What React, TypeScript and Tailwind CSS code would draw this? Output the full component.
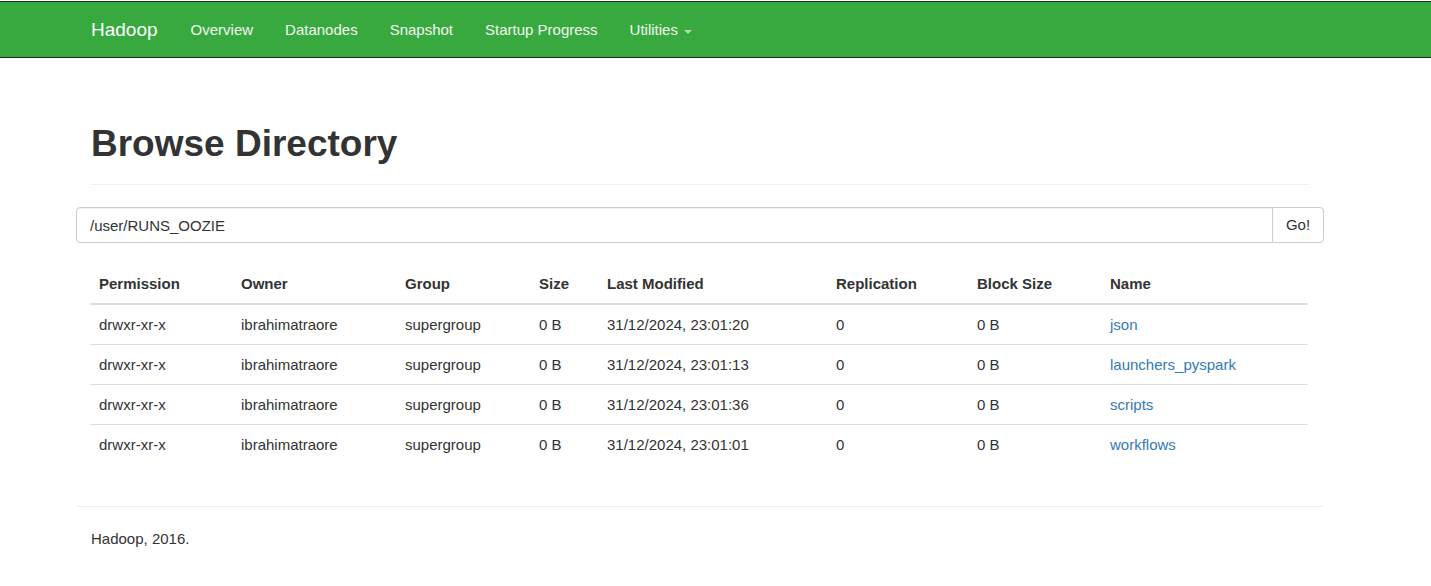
import React from 'react';

const rows = [
  { modified: '31/12/2024, 23:01:20', name: 'json' },
  { modified: '31/12/2024, 23:01:13', name: 'launchers_pyspark' },
  { modified: '31/12/2024, 23:01:36', name: 'scripts' },
  { modified: '31/12/2024, 23:01:01', name: 'workflows' },
];

const headers = [
  { label: 'Permission', w: 'w-[142px]' },
  { label: 'Owner', w: 'w-[164px]' },
  { label: 'Group', w: 'w-[134px]' },
  { label: 'Size', w: 'w-[68px]' },
  { label: 'Last Modified', w: 'w-[229px]' },
  { label: 'Replication', w: 'w-[141px]' },
  { label: 'Block Size', w: 'w-[133px]' },
  { label: 'Name', w: 'w-[206px]' },
];

function Navbar() {
  return (
    <nav className="mt-px h-[57px] bg-[#38a93f] border-y border-[#1f2a1f]">
      <div className="pl-[76px] h-full">
        <div className="flex items-center h-full pt-[2px]">
          <a className="pl-[15px] pr-[17px] text-[19px] text-white">Hadoop</a>
          {['Overview', 'Datanodes', 'Snapshot', 'Startup Progress'].map((item) => (
            <a key={item} className="px-4 text-[15px] text-[#f2f8f2]">
              {item}
            </a>
          ))}
          <a className="px-4 text-[15px] text-[#f2f8f2] flex items-center">
            Utilities
            <span className="ml-[6px] mt-[2px] w-0 h-0 border-t-[4px] border-x-[4px] border-t-[#b5dab7] border-x-transparent" />
          </a>
        </div>
      </div>
    </nav>
  );
}

export default function App() {
  return (
    <div className="min-h-[586px] bg-white text-[#333] text-[15px]" style={{ fontFamily: '"Liberation Sans", Arial, sans-serif' }}>
      <Navbar />

      <div className="pl-[76px]">
        <div className="w-[1248px]">
          <div className="px-[15px]">
            <h1 className="mt-[65px] pb-[20px] border-b border-[#eee] text-[37px] leading-[41px] font-bold text-[#333]">
              Browse Directory
            </h1>
          </div>

          <div className="mt-[22px] flex h-[36px]">
            <input
              readOnly
              value="/user/RUNS_OOZIE"
              className="flex-1 h-full px-[13px] text-[15px] text-[#333] border border-[#ccc] rounded-l-[4px] outline-none shadow-[inset_0_1px_1px_rgba(0,0,0,0.075)]"
            />
            <button className="w-[52px] h-full -ml-px border border-[#ccc] rounded-r-[4px] bg-white text-[15px] text-[#333]">
              Go!
            </button>
          </div>

          <div className="px-[15px] mt-[21px]">
            <table className="w-[1217px] table-fixed border-collapse">
              <thead>
                <tr>
                  {headers.map((h) => (
                    <th key={h.label} className={`${h.w} text-left font-bold px-[8px] py-[9px] leading-[21px] border-b-2 border-[#ddd]`}>
                      {h.label}
                    </th>
                  ))}
                </tr>
              </thead>
              <tbody>
                {rows.map((r, i) => (
                  <tr key={r.name}>
                    {['drwxr-xr-x', 'ibrahimatraore', 'supergroup', '0 B', r.modified, '0', '0 B'].map((c, j) => (
                      <td key={j} className={`px-[8px] py-[9px] leading-[21px] ${i > 0 ? 'border-t border-[#ddd]' : ''}`}>
                        {c}
                      </td>
                    ))}
                    <td className={`px-[8px] py-[9px] leading-[21px] ${i > 0 ? 'border-t border-[#ddd]' : ''}`}>
                      <a className="text-[#337ab7]">{r.name}</a>
                    </td>
                  </tr>
                ))}
              </tbody>
            </table>
          </div>

          <div className="mt-[42px] border-t border-[#eee] px-[15px] pt-[21px]">
            <p className="leading-[21px]">Hadoop, 2016.</p>
          </div>
        </div>
      </div>
    </div>
  );
}
